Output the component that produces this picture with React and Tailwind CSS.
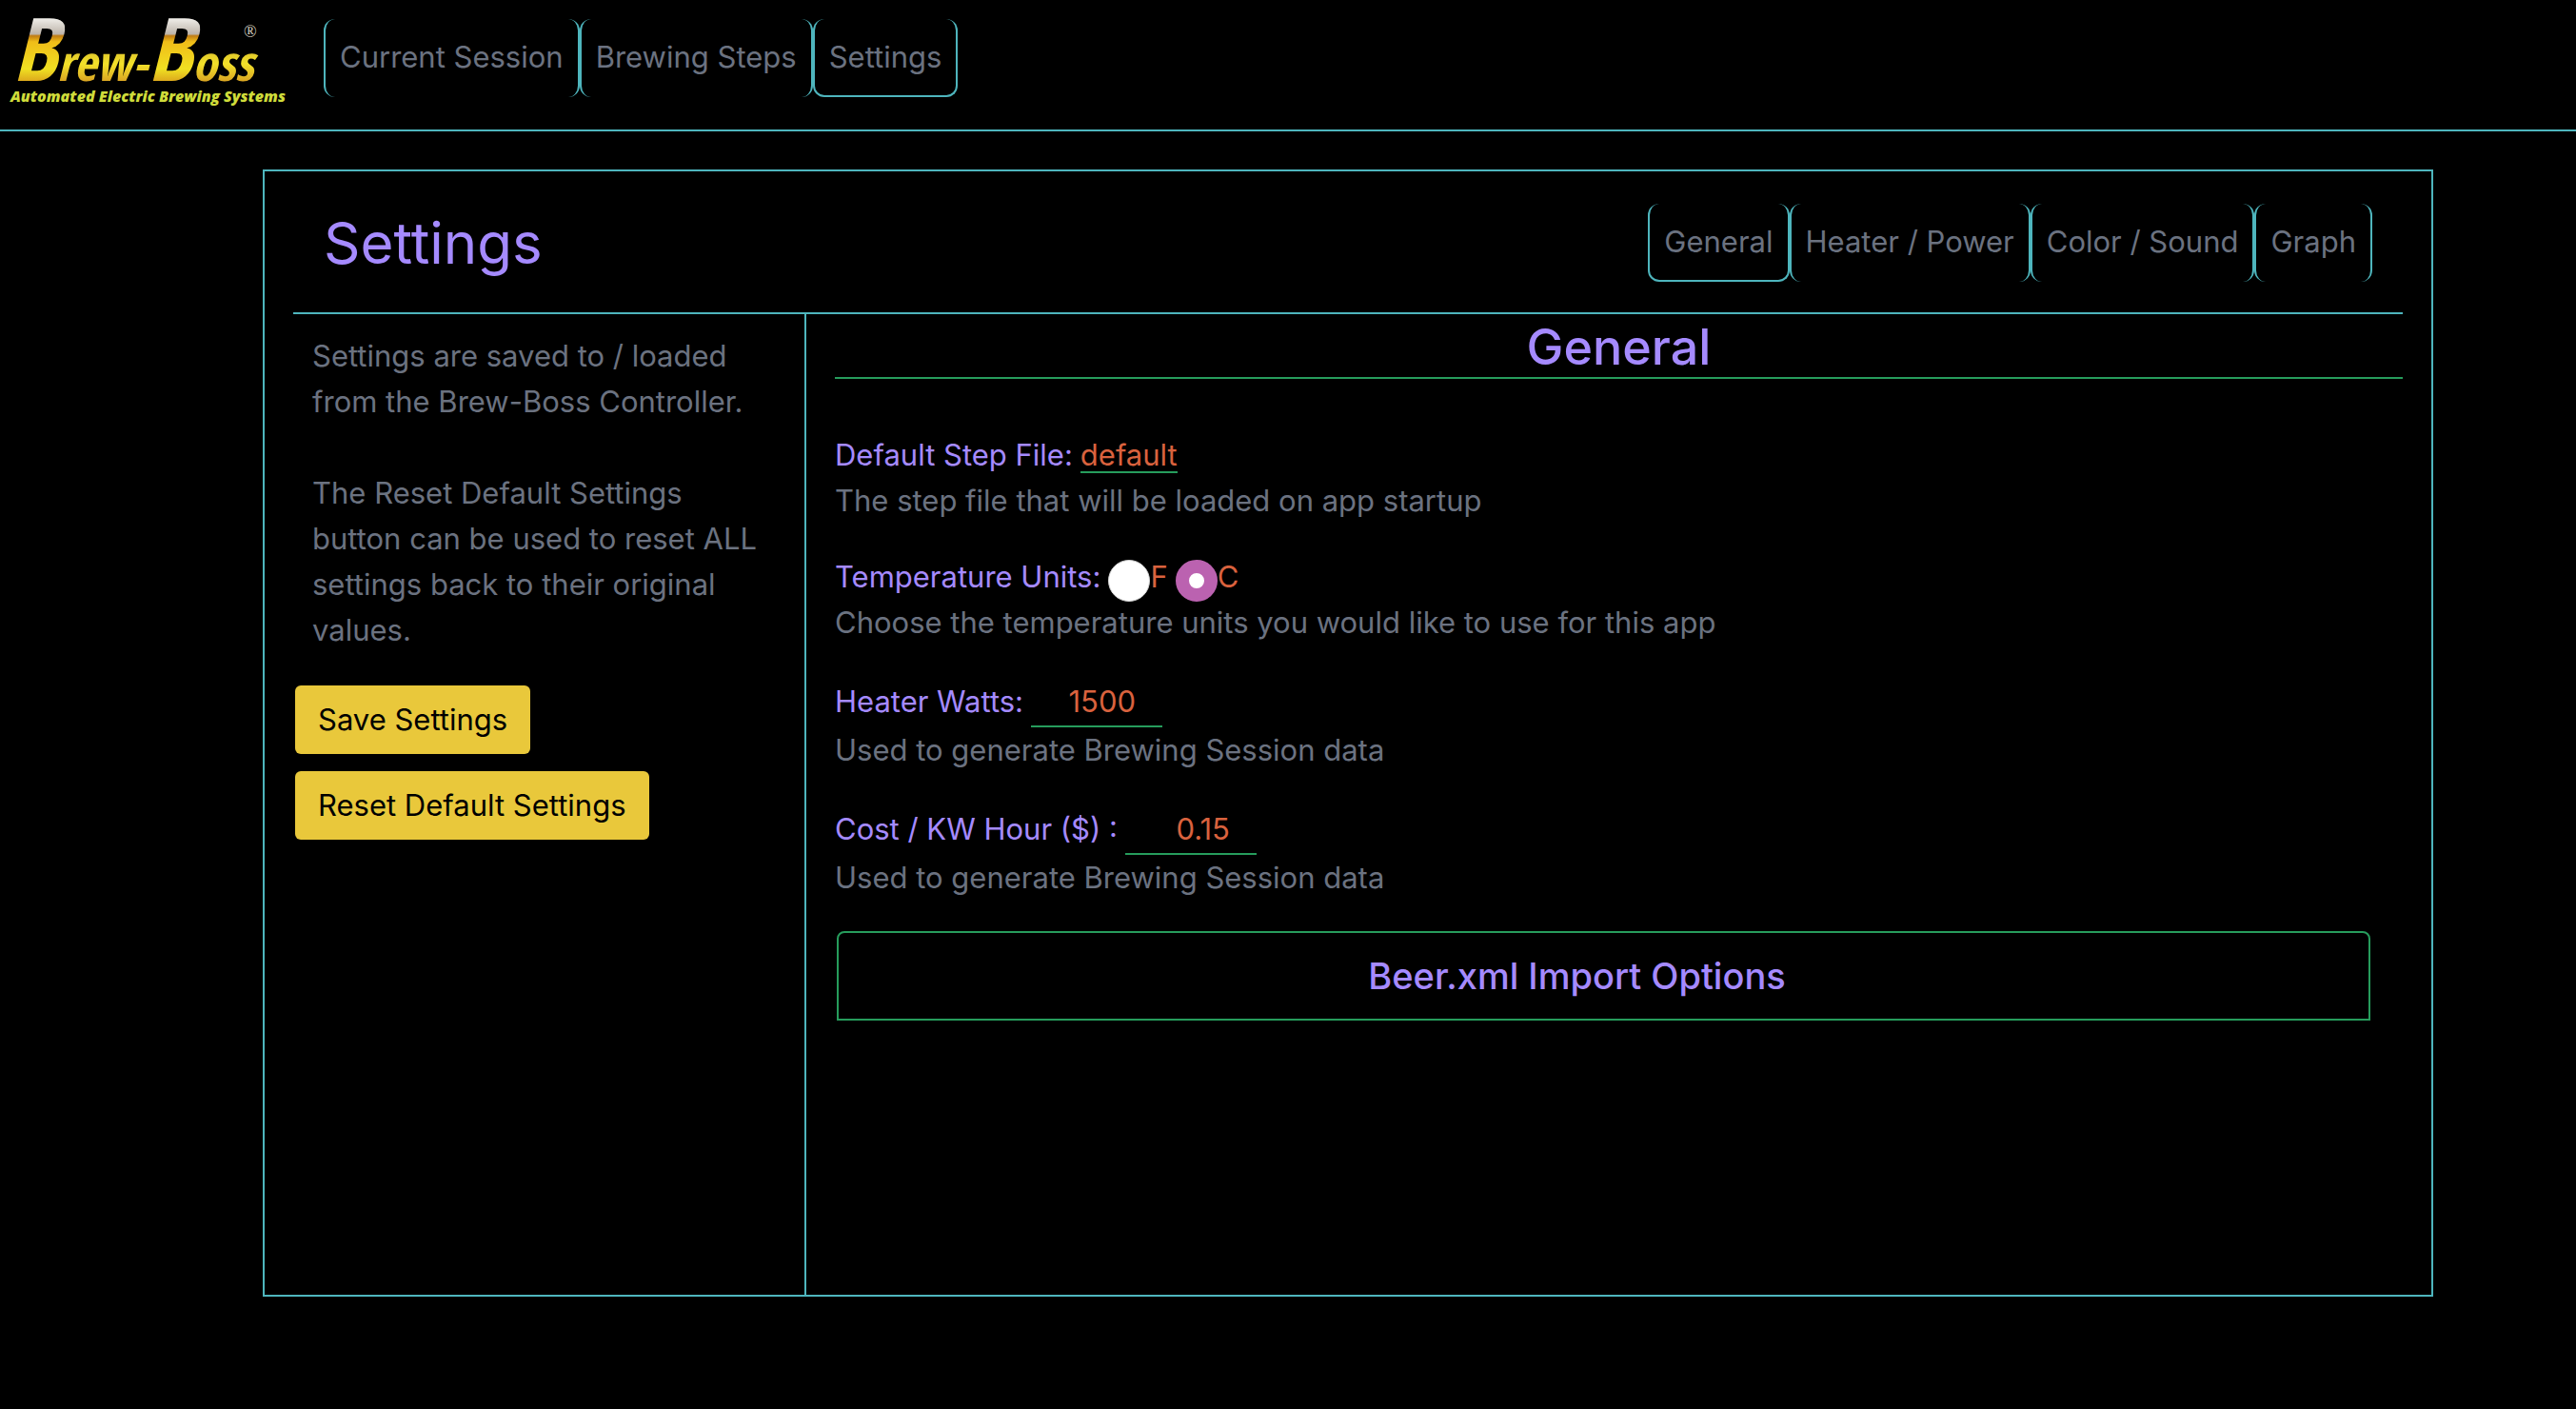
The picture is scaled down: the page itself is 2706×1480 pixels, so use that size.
import { useState } from 'react';

const tabBase = 'border-x-2 border-[#4eb5bd] rounded-xl px-[15px] py-4 leading-[48px] whitespace-nowrap';

function Tabs({ label, items, initial }) {
  const [active, setActive] = useState(initial);
  return (
    <nav aria-label={label} className="flex items-stretch">
      {items.map((item) => (
        <a
          key={item}
          href="#"
          aria-current={item === active ? 'page' : undefined}
          onClick={(e) => {
            e.preventDefault();
            setActive(item);
          }}
          className={item === active ? `${tabBase} border-b-2` : tabBase}
        >
          {item}
        </a>
      ))}
    </nav>
  );
}

function Logo() {
  return (
    <svg role="img" aria-label="Brew-Boss Automated Electric Brewing Systems" viewBox="0 0 300 116" className="h-[116px] w-[300px] shrink-0 overflow-visible">
      <defs>
        <linearGradient id="mug" gradientUnits="userSpaceOnUse" x1="0" y1="10" x2="0" y2="78">
          <stop offset="0" stopColor="#f4f2ee" />
          <stop offset="0.26" stopColor="#bdb4aa" />
          <stop offset="0.29" stopColor="#c07c12" />
          <stop offset="0.38" stopColor="#f0bd18" />
          <stop offset="0.8" stopColor="#f0e022" />
          <stop offset="1" stopColor="#dba51c" />
        </linearGradient>
        <linearGradient id="beer" gradientUnits="userSpaceOnUse" x1="0" y1="40" x2="0" y2="78">
          <stop offset="0" stopColor="#d3b42a" />
          <stop offset="0.5" stopColor="#f3e22a" />
          <stop offset="1" stopColor="#d9a322" />
        </linearGradient>
      </defs>
      <text x="5" y="77" className="font-['Open_Sans_Condensed',sans-serif] font-bold italic">
        <tspan fontSize="92" fill="url(#mug)">B</tspan>
        <tspan fontSize="52" fill="url(#beer)">rew-</tspan>
        <tspan fontSize="92" fill="url(#mug)">B</tspan>
        <tspan fontSize="52" fill="url(#beer)">oss</tspan>
      </text>
      <text x="248" y="31" fontSize="18" fill="#d8d3c0" className="font-['Liberation_Serif',serif]">®</text>
      <text x="3" y="99" fontSize="16" fill="#cfdc3a" className="font-['Open_Sans',sans-serif] font-extrabold italic">
        Automated Electric Brewing Systems
      </text>
    </svg>
  );
}

function Field({ children, hint }) {
  return (
    <div>
      <div className="flex items-baseline text-[#a58aff]">{children}</div>
      <p>{hint}</p>
    </div>
  );
}

const numberInput =
  'w-[138px] border-b-2 border-[#269c5c] bg-transparent py-0.5 pr-7 text-right leading-[48px] h-[54px] text-[#d9623e] outline-none';
const radio =
  'mt-2 size-11 shrink-0 appearance-none rounded-full border border-[#d4d4d4] bg-white checked:border-[14px] checked:border-[#bb62b0]';

export default function App() {
  const [units, setUnits] = useState('C');
  return (
    <div className="min-h-screen bg-black pb-10 font-['Inter',sans-serif] text-[31px] leading-[48px] text-[#6b7280]">
      <header className="flex h-[138px] items-start gap-8 border-b-2 border-[#4eb5bd] pl-2">
        <div className="pt-2">
          <Logo />
        </div>
        <div className="pt-5">
          <Tabs label="Main" items={['Current Session', 'Brewing Steps', 'Settings']} initial="Settings" />
        </div>
      </header>

      <main className="mt-10 mr-[150px] ml-[276px] flex min-h-[80vh] flex-col border-2 border-[#4eb5bd]">
        <div className="mx-[30px] flex items-center justify-between border-b-2 border-[#4eb5bd] px-8 pt-[34px] pb-8">
          <h1 className="text-[60px] leading-[72px] text-[#a58aff]">Settings</h1>
          <Tabs label="Settings sections" items={['General', 'Heater / Power', 'Color / Sound', 'Graph']} initial="General" />
        </div>

        <div className="flex grow">
          <aside className="w-1/4 shrink-0 border-r-2 border-[#4eb5bd] pl-[30px]">
            <div className="flex flex-col gap-12 py-5 pr-8 pl-5">
              <p>Settings are saved to / loaded from the Brew-Boss Controller.</p>
              <p>The Reset Default Settings button can be used to reset ALL settings back to their original values.</p>
            </div>
            <div className="mt-3.5 flex flex-col items-start gap-[18px] px-0.5">
              <button type="button" className="rounded-md bg-[#e9c83b] px-6 py-3 text-black">Save Settings</button>
              <button type="button" className="rounded-md bg-[#e9c83b] px-6 py-3 text-black">Reset Default Settings</button>
            </div>
          </aside>

          <section className="min-w-0 grow px-[30px]">
            <h2 className="border-b-2 border-[#269c5c] pt-1 text-center text-[52px] leading-[62px] font-medium text-[#a58aff]">General</h2>
            <div className="mt-14 flex flex-col gap-8">
              <Field hint="The step file that will be loaded on app startup">
                <span className="mr-2">Default Step File:</span>
                <button type="button" className="border-b-2 border-[#269c5c] leading-[34px] text-[#d9623e]">default</button>
              </Field>

              <div>
                <div role="radiogroup" aria-labelledby="units" className="flex h-12 items-center gap-2">
                  <span id="units" className="text-[#a58aff]">Temperature Units:</span>
                  <label className="flex h-12 items-center text-[#d9623e]">
                    <input type="radio" name="units" className={radio} checked={units === 'F'} onChange={() => setUnits('F')} />F
                  </label>
                  <label className="flex h-12 items-center text-[#d9623e]">
                    <input type="radio" name="units" className={radio} checked={units === 'C'} onChange={() => setUnits('C')} />C
                  </label>
                </div>
                <p>Choose the temperature units you would like to use for this app</p>
              </div>

              <Field hint="Used to generate Brewing Session data">
                <label htmlFor="watts" className="mr-2">Heater Watts:</label>
                <input id="watts" type="text" inputMode="numeric" defaultValue="1500" className={numberInput} />
              </Field>

              <Field hint="Used to generate Brewing Session data">
                <label htmlFor="cost" className="mr-2">Cost / KW Hour ($) :</label>
                <input id="cost" type="text" inputMode="decimal" defaultValue="0.15" className={numberInput} />
              </Field>

              <button
                type="button"
                aria-expanded="false"
                className="mr-[34px] ml-0.5 h-[94px] rounded-t-lg border-2 border-[#269c5c] pr-14 text-center text-[38px] font-medium text-[#a58aff]"
              >
                Beer.xml Import Options
              </button>
            </div>
          </section>
        </div>
      </main>
    </div>
  );
}
